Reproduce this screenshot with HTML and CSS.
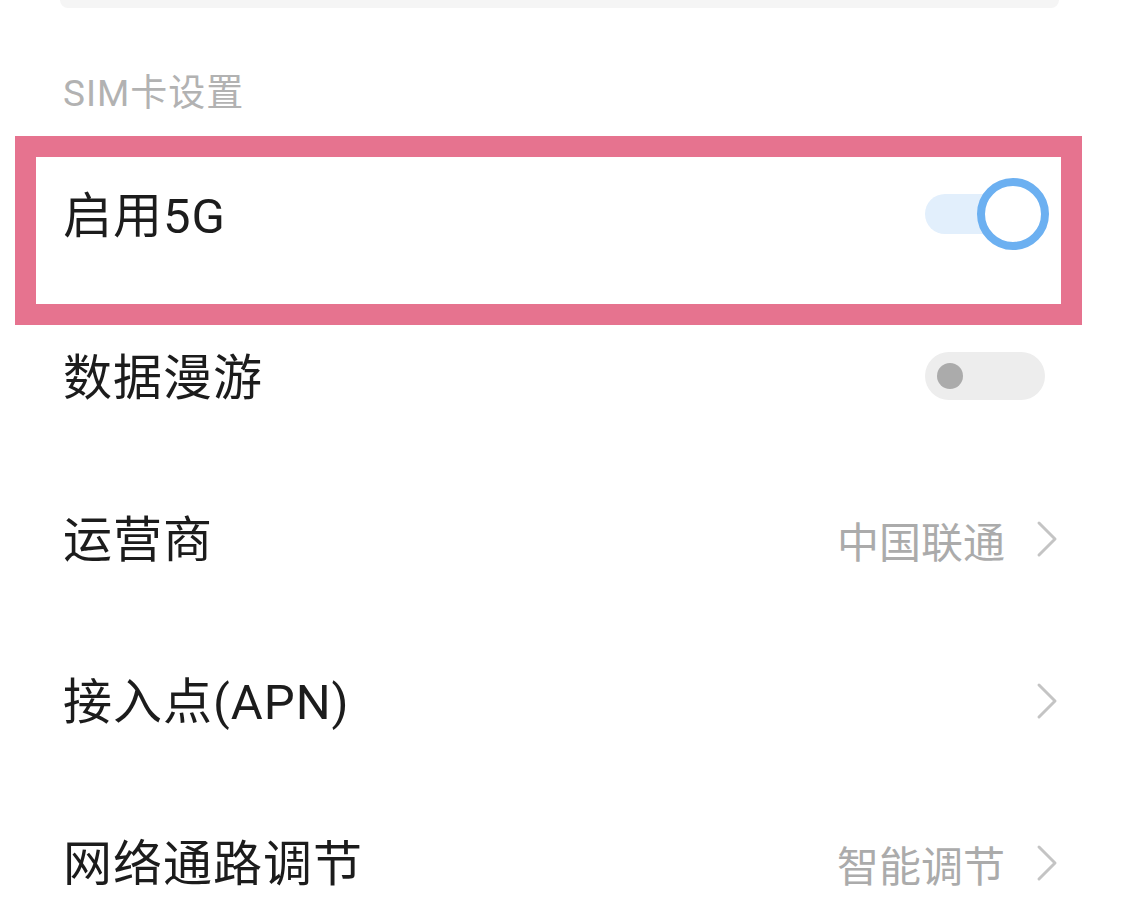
FILE: index.html
```html
<!DOCTYPE html>
<html lang="zh-CN">
<head>
<meta charset="utf-8">
<title>SIM卡设置</title>
<link rel="stylesheet" href="styles.css">
</head>
<body>
<div class="page">
  <div class="top-strip"></div>
  <div class="section-title">SIM卡设置</div>
  <div class="list">
    <div class="row row-highlight">
      <span class="label">启用5G</span>
      <div class="switch switch-on"><span class="knob"></span></div>
      <div class="highlight-frame"></div>
    </div>
    <div class="row">
      <span class="label">数据漫游</span>
      <div class="switch switch-off"><span class="knob"></span></div>
    </div>
    <div class="row">
      <span class="label">运营商</span>
      <div class="trail">
        <span class="value">中国联通</span>
        <svg class="chevron" viewBox="0 0 24 40" width="24" height="40"><polyline points="4,4 20,20 4,36" fill="none" stroke="#c4c4c4" stroke-width="3" stroke-linecap="round" stroke-linejoin="round"/></svg>
      </div>
    </div>
    <div class="row">
      <span class="label">接入点(APN)</span>
      <div class="trail">
        <svg class="chevron" viewBox="0 0 24 40" width="24" height="40"><polyline points="4,4 20,20 4,36" fill="none" stroke="#c4c4c4" stroke-width="3" stroke-linecap="round" stroke-linejoin="round"/></svg>
      </div>
    </div>
    <div class="row">
      <span class="label">网络通路调节</span>
      <div class="trail">
        <span class="value">智能调节</span>
        <svg class="chevron" viewBox="0 0 24 40" width="24" height="40"><polyline points="4,4 20,20 4,36" fill="none" stroke="#c4c4c4" stroke-width="3" stroke-linecap="round" stroke-linejoin="round"/></svg>
      </div>
    </div>
  </div>
</div>
</body>
</html>
```
FILE: styles.css
```css
html, body {
  margin: 0;
  padding: 0;
  background: #ffffff;
}

body {
  font-family: "Noto Sans CJK SC", "Noto Sans", sans-serif;
  color: #1e1e1e;
  overflow: hidden;
}

.page {
  width: 1125px;
  height: 900px;
  overflow: hidden;
}

.top-strip {
  height: 8px;
  margin: 0 66px 0 60px;
  background: #f5f5f5;
  border-radius: 0 0 10px 10px;
}

.section-title {
  padding: 64px 0 19px 63px;
  font-family: "Roboto", "Noto Sans CJK SC", sans-serif;
  font-size: 37px;
  line-height: 44px;
  letter-spacing: 1px;
  color: #b2b2b2;
}

.list {
  display: flex;
  flex-direction: column;
}

.row {
  position: relative;
  height: 162px;
  padding: 0 66px 0 63px;
  display: flex;
  align-items: center;
  justify-content: space-between;
  box-sizing: border-box;
}

.label {
  font-family: "Roboto", "Noto Sans CJK SC", sans-serif;
  font-size: 49px;
  line-height: 60px;
  color: #1c1c1c;
  letter-spacing: 1px;
  margin-top: 2px;
}

.highlight-frame {
  position: absolute;
  left: 15px;
  top: 1px;
  width: 1067px;
  height: 189px;
  box-sizing: border-box;
  border: 21px solid #e6738f;
  pointer-events: none;
}

.switch {
  position: relative;
  width: 120px;
  margin-right: 14px;
}

.switch-on {
  height: 40px;
  border-radius: 20px;
  background: #e2effc;
  margin-top: -4px;
}

.switch-on .knob {
  position: absolute;
  right: -4px;
  top: 50%;
  width: 72px;
  height: 72px;
  margin-top: -36px;
  box-sizing: border-box;
  border-radius: 50%;
  border: 8px solid #6cb0f1;
  background: #ffffff;
}

.switch-off {
  height: 48px;
  border-radius: 24px;
  background: #ededed;
  margin-top: -4px;
}

.switch-off .knob {
  position: absolute;
  left: 12px;
  top: 11px;
  width: 26px;
  height: 26px;
  border-radius: 50%;
  background: #ababab;
}

.trail {
  display: flex;
  align-items: center;
  gap: 30px;
}

.value {
  font-size: 42px;
  line-height: 52px;
  color: #ababab;
}

.chevron {
  display: block;
  margin-top: -2px;
}
```
